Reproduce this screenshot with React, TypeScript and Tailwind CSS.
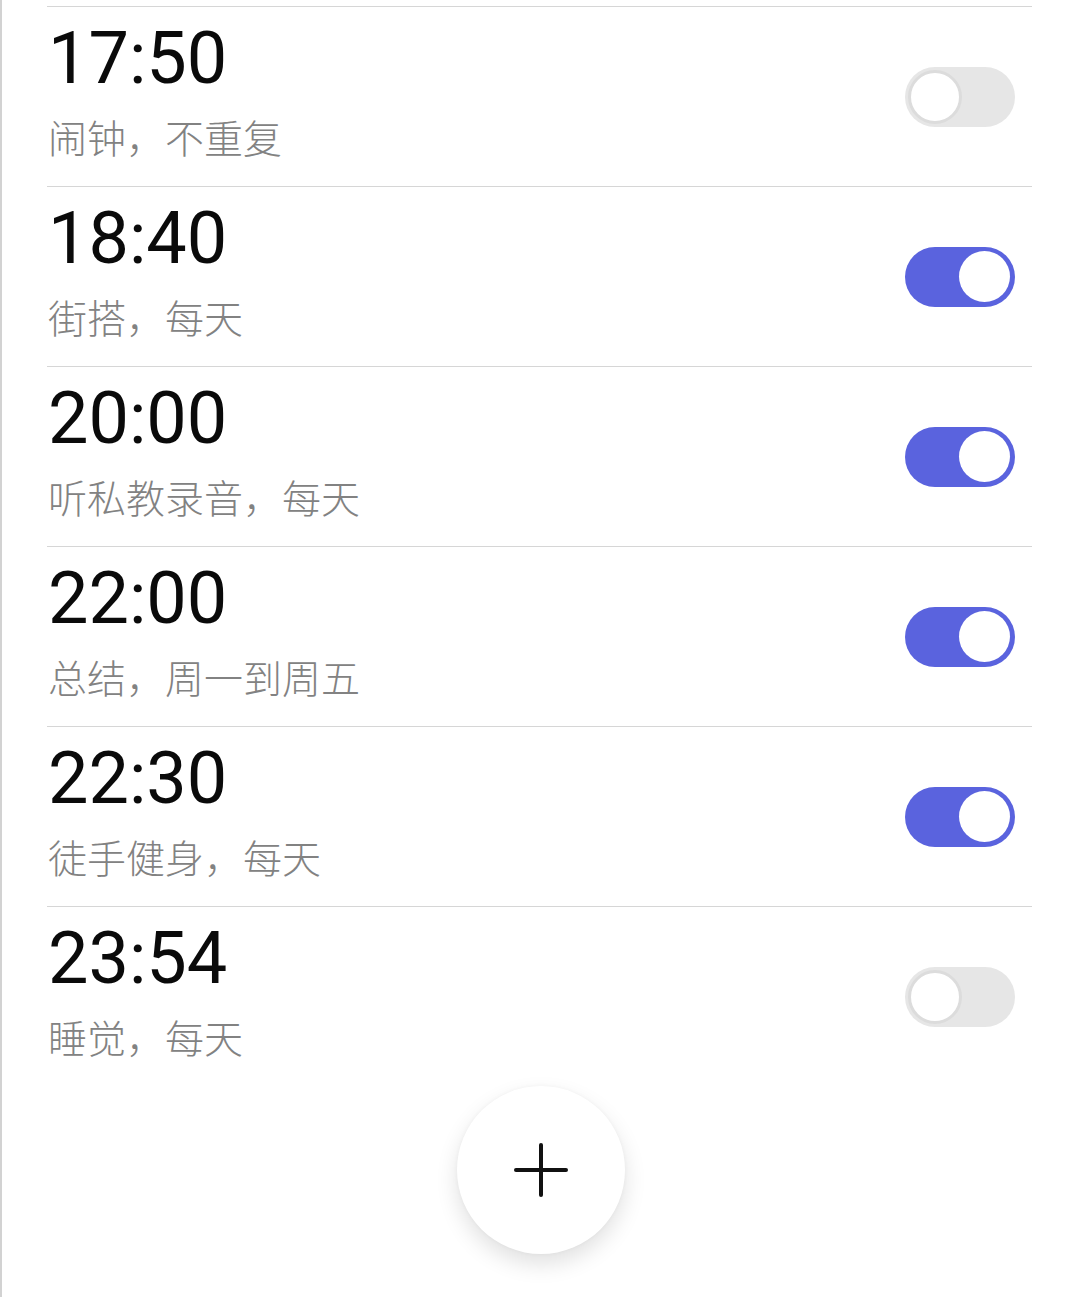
import React from "react";

type Alarm = { time: string; label: string; on: boolean };

const alarms: Alarm[] = [
  { time: "17:50", label: "闹钟，不重复", on: false },
  { time: "18:40", label: "街搭，每天", on: true },
  { time: "20:00", label: "听私教录音，每天", on: true },
  { time: "22:00", label: "总结，周一到周五", on: true },
  { time: "22:30", label: "徒手健身，每天", on: true },
  { time: "23:54", label: "睡觉，每天", on: false },
];

function Toggle({ on }: { on: boolean }) {
  if (on) {
    return (
      <div className="w-[110px] h-[60px] rounded-full bg-[#5a63de] flex items-center justify-end pr-[5px]">
        <div className="w-[51px] h-[51px] rounded-full bg-white" />
      </div>
    );
  }
  return (
    <div className="w-[110px] h-[60px] rounded-full bg-[#e6e6e6] flex items-center pl-[3px]">
      <div className="w-[54px] h-[54px] rounded-full bg-white border-[3px] border-[#dcdcdc]" />
    </div>
  );
}

export default function App() {
  return (
    <div className="min-h-screen bg-white border-l-2 border-[#d2d2d2] pt-[6px]">
      <div className="ml-[45px] w-[985px]">
        {alarms.map((a) => (
          <div
            key={a.time}
            className="h-[180px] border-t border-[#d6d6d6] flex items-center justify-between pr-[17px]"
          >
            <div className="flex flex-col self-start pt-[16px] pl-[1px]">
              <div
                className="text-[72px] leading-[72px] text-[#0a0a0a]"
                style={{ fontFamily: "Roboto, 'Noto Sans', sans-serif" }}
              >
                {a.time}
              </div>
              <div
                className="mt-[22px] text-[39px] leading-[39px] font-light text-[#828282]"
                style={{ fontFamily: "'Noto Sans CJK SC', 'Noto Sans', sans-serif" }}
              >
                {a.label}
              </div>
            </div>
            <Toggle on={a.on} />
          </div>
        ))}
      </div>
      <div className="flex justify-center">
        <button className="w-[168px] h-[168px] rounded-full bg-white shadow-[0_10px_22px_rgba(0,0,0,0.12),0_0_4px_rgba(0,0,0,0.04)] flex items-center justify-center">
          <div className="relative w-[54px] h-[54px]">
            <div className="absolute left-0 top-[25px] w-[54px] h-[4px] rounded-full bg-[#111]" />
            <div className="absolute top-0 left-[25px] w-[4px] h-[54px] rounded-full bg-[#111]" />
          </div>
        </button>
      </div>
    </div>
  );
}
